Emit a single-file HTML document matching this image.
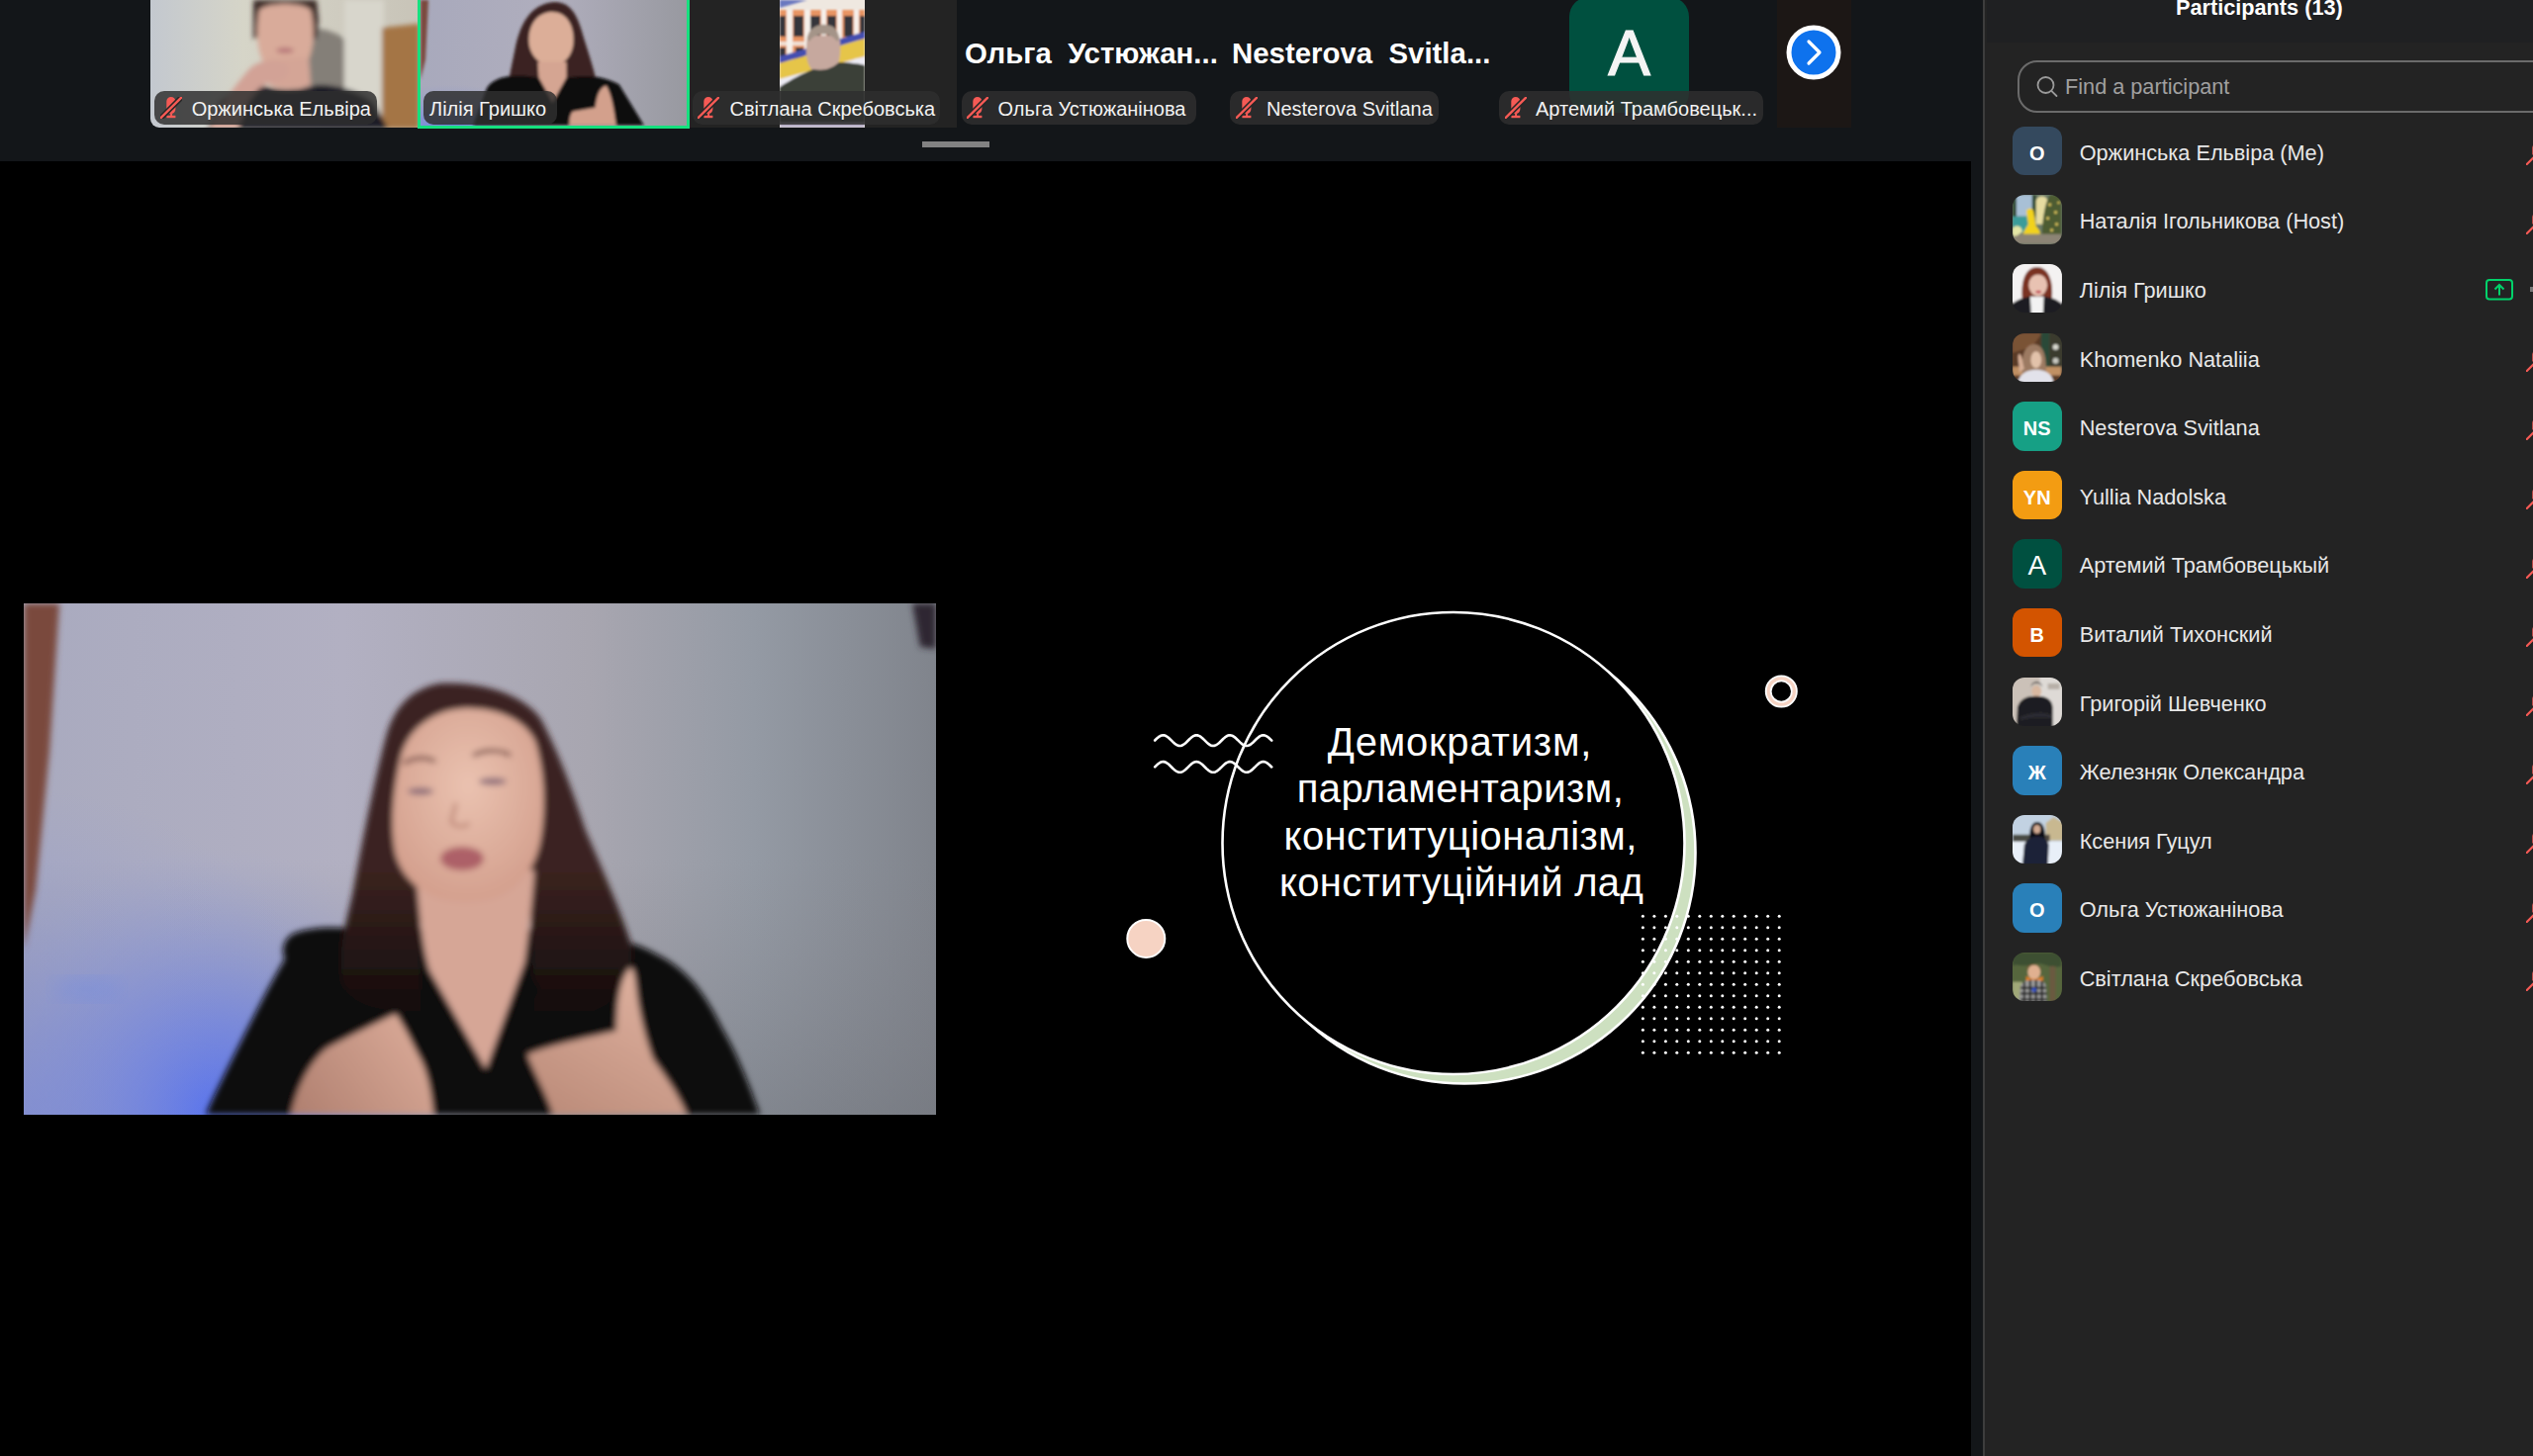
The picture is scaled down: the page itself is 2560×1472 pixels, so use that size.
<!DOCTYPE html>
<html><head><meta charset="utf-8">
<style>
*{margin:0;padding:0;box-sizing:border-box}
html,body{width:2560px;height:1472px;overflow:hidden;background:#000;font-family:"Liberation Sans",sans-serif}
.a{position:absolute}
.strip{left:0;top:0;width:2004px;height:163px;background:#131619}
.vbar{left:1992px;top:162px;width:12px;height:1310px;background:#131619}
.panel{left:2006px;top:0;width:554px;height:1472px;background:#232323}
.pborder{left:2004px;top:0;width:1.6px;height:1472px;background:#3d3d3d}
.phead{left:2008px;top:0;width:552px;height:43px;background:#1f2022}
.lbl{height:34px;border-radius:10px;background:rgba(46,46,46,0.84);color:#f2f2f2;font-size:20px;line-height:20px;white-space:nowrap}
.lbl span{position:absolute;top:7.5px}
.row{left:2034px;width:520px;height:50px}
.av{position:absolute;left:0;top:0;width:49.5px;height:49.5px;border-radius:12px;color:#fff;font-weight:bold;font-size:21.5px;text-align:center;line-height:54px;overflow:hidden}
.nm{position:absolute;left:67.7px;top:16.2px;font-size:21.7px;line-height:21.7px;color:#e8e8e8;white-space:nowrap}
.rmic{position:absolute;left:519px;top:24px}
</style></head><body>
<div class="a strip"></div>
<div class="a vbar"></div>
<div class="a pborder"></div>
<div class="a panel"></div>
<div class="a phead"></div>

<!-- top strip tiles -->
<!-- tile 1 -->
<div class="a" style="left:152px;top:0;width:270px;height:129px;overflow:hidden;border-radius:0 0 0 9px">
<svg width="270" height="129" viewBox="152 0 270 129" style="display:block">
<defs><linearGradient id="t1bg" x1="0" y1="0" x2="1" y2="0"><stop offset="0" stop-color="#c3c8cf"/><stop offset="0.35" stop-color="#d6d5c8"/><stop offset="0.7" stop-color="#cfccc0"/><stop offset="1" stop-color="#c8c4b8"/></linearGradient>
<filter id="t1b"><feGaussianBlur stdDeviation="2.5"/></filter></defs>
<rect x="152" y="0" width="270" height="129" fill="url(#t1bg)"/>
<g filter="url(#t1b)">
<path d="M300 28 C312 26 340 30 348 40 L350 92 L306 92 Z" fill="#77716b" opacity="0.85"/>
<rect x="348" y="0" width="40" height="129" fill="#d8d6cc"/>
<path d="M386 28 L424 24 L424 130 L386 130 Z" fill="#a47444"/>
<path d="M256 0 L320 0 L322 20 L320 40 L314 36 L312 14 L264 14 L262 36 L256 40 Z" fill="#3a2c28"/>
<path d="M262 10 C270 2 306 2 314 10 C318 25 318 45 312 60 C305 72 296 77 288 77 C278 77 268 70 264 58 C259 45 259 25 262 10 Z" fill="#d9ab9a"/>
<path d="M272 60 L272 86 C285 92 300 92 314 86 L312 58 Z" fill="#d4a596"/>
<ellipse cx="288" cy="51" rx="9" ry="3" fill="#b8787a"/>
<path d="M210 130 L222 104 C232 92 250 86 262 86 C278 92 300 93 320 86 C345 86 368 94 378 104 L392 130 Z" fill="#1e1e28"/>
<path d="M212 130 C220 110 235 90 250 72 C258 62 272 58 290 66 C294 72 290 80 280 82 C266 84 258 92 250 104 L240 130 Z" fill="#d2a296"/>
</g></svg></div>
<div class="a lbl" style="left:156px;top:92px;width:225px"><svg class="a" style="left:5.6px;top:5.9px" width="22" height="22" viewBox="0 0 22 22"><path d="M6.3 4.55A4.55 4.55 0 0 1 15.4 4.55V12.3A4.55 4.8 0 0 1 6.3 12.3Z" fill="#f65a55"/><rect x="10.1" y="16.5" width="2" height="3" fill="#f65a55"/><rect x="6.4" y="18.8" width="9" height="2.4" fill="#f65a55"/><line x1="0.8" y1="21" x2="21" y2="0.8" stroke="#262727" stroke-width="5.5"/><line x1="0.8" y1="21" x2="21" y2="0.8" stroke="#f65a55" stroke-width="2.4" stroke-linecap="round"/></svg><span style="left:37.7px">Оржинська Ельвіра</span></div>

<!-- tile 2 (active speaker) -->
<div class="a" style="left:422px;top:-3px;width:275px;height:133.4px;border:3.4px solid #16e07e;overflow:hidden;background:#9899a0">
<svg width="100%" height="100%" viewBox="425 0 268 126.6" preserveAspectRatio="none" style="display:block">
<defs><linearGradient id="t2bg" x1="0" y1="0" x2="1" y2="0"><stop offset="0" stop-color="#a8a9bc"/><stop offset="0.5" stop-color="#b0aebd"/><stop offset="1" stop-color="#9899a0"/></linearGradient>
<radialGradient id="t2bl" cx="0.15" cy="1" r="0.5"><stop offset="0" stop-color="#5a78ee" stop-opacity="0.8"/><stop offset="1" stop-color="#8090d8" stop-opacity="0"/></radialGradient>
<filter id="t2b"><feGaussianBlur stdDeviation="1.8"/></filter></defs>
<rect x="425" y="0" width="268" height="127" fill="url(#t2bg)"/>
<rect x="425" y="40" width="200" height="90" fill="url(#t2bl)"/>
<g filter="url(#t2b)">
<path d="M425 0 L433 0 L430 60 L425 80 Z" fill="#7a4a3e"/>
<path d="M560 2 C535 4 525 25 520 50 C515 75 510 95 512 110 L606 110 C606 90 598 65 590 40 C584 18 578 2 560 2 Z" fill="#3a2320"/>
<path d="M557 12 C540 13 534 28 534 40 C534 55 545 66 557 66 C570 66 579 55 579 40 C579 25 572 12 557 12 Z" fill="#dcae98"/>
<path d="M543 62 L544 78 L558 103 L572 78 L572 62 Z" fill="#d5a592"/>
<path d="M478 126 L492 88 C500 76 520 74 544 78 L558 103 L572 78 C590 75 610 76 625 85 L650 126 Z" fill="#0c0a0b"/>
<path d="M612 86 C604 88 602 100 601 108 L578 112 C574 118 575 126 575 126 L622 126 C620 112 618 96 612 86 Z" fill="#d3a08c"/>
</g>
</svg></div>
<div class="a lbl" style="left:428px;top:92px;width:135px"><span style="left:6px">Лілія Гришко</span></div>

<!-- tile 3 -->
<div class="a" style="left:697px;top:0;width:270px;height:129px;background:#232323"></div>
<svg class="a" style="left:788px;top:0" width="86" height="129" viewBox="788 0 86 129">
<defs><filter id="t3b"><feGaussianBlur stdDeviation="1.2"/></filter></defs>
<rect x="788" y="0" width="86" height="129" fill="#efe8e0"/>
<g filter="url(#t3b)">
<path d="M788 0 L816 0 L788 8 Z" fill="#6a78c0"/>
<rect x="788" y="10" width="86" height="35" fill="#e89464"/>
<rect x="788" y="42" width="86" height="4" fill="#f0e0d4"/>
<rect x="788" y="46" width="86" height="20" fill="#e89464"/>
<g fill="#f6f0ea"><rect x="795" y="10" width="6" height="56"/><rect x="813" y="10" width="6" height="56"/><rect x="830" y="10" width="5" height="56"/><rect x="846" y="10" width="5" height="56"/><rect x="863" y="10" width="5" height="56"/></g>
<g fill="#34343a"><rect x="788" y="16" width="6" height="21"/><rect x="802" y="16" width="10" height="21"/><rect x="819" y="16" width="10" height="21"/><rect x="836" y="16" width="9" height="21"/><rect x="853" y="16" width="9" height="21"/><rect x="869" y="16" width="5" height="21"/><rect x="788" y="48" width="6" height="14"/><rect x="804" y="48" width="8" height="14"/></g>
<path d="M788 57 L874 32 L874 39 L788 64 Z" fill="#4450b0"/>
<path d="M788 64 L874 39 L874 57 L788 80 Z" fill="#e6c54a"/>
<path d="M788 80 L874 57 L874 66 L788 92 Z" fill="#ecebf4"/>
<path d="M816 36 C814 50 814 62 820 70 C826 76 842 76 846 68 C850 58 850 44 848 36 Z" fill="#c6a89e"/>
<path d="M816 40 C816 28 828 24 834 25 C842 25 848 30 848 40 L846 42 C840 32 824 32 818 42 Z" fill="#a49488"/>
<path d="M788 88 C800 80 812 74 822 70 C832 72 840 70 848 63 C860 63 870 65 874 66 L874 129 L788 129 Z" fill="#3a3f39"/>
<rect x="788" y="124" width="86" height="5" fill="#b8b0c8"/>
</g>
</svg>
<div class="a lbl" style="left:699.5px;top:92px;width:250px"><svg class="a" style="left:5.6px;top:5.9px" width="22" height="22" viewBox="0 0 22 22"><path d="M6.3 4.55A4.55 4.55 0 0 1 15.4 4.55V12.3A4.55 4.8 0 0 1 6.3 12.3Z" fill="#f65a55"/><rect x="10.1" y="16.5" width="2" height="3" fill="#f65a55"/><rect x="6.4" y="18.8" width="9" height="2.4" fill="#f65a55"/><line x1="0.8" y1="21" x2="21" y2="0.8" stroke="#262727" stroke-width="5.5"/><line x1="0.8" y1="21" x2="21" y2="0.8" stroke="#f65a55" stroke-width="2.4" stroke-linecap="round"/></svg><span style="left:38px">Світлана Скребовська</span></div>

<!-- tile 4,5 bold names -->
<div class="a" style="left:975px;top:38.8px;font-size:29.4px;line-height:30px;font-weight:bold;color:#fff;white-space:pre">Ольга  Устюжан...</div>
<div class="a" style="left:1245px;top:38.8px;font-size:29.4px;line-height:30px;font-weight:bold;color:#fff;white-space:pre">Nesterova  Svitla...</div>
<div class="a lbl" style="left:971.5px;top:92px;width:237px"><svg class="a" style="left:5.6px;top:5.9px" width="22" height="22" viewBox="0 0 22 22"><path d="M6.3 4.55A4.55 4.55 0 0 1 15.4 4.55V12.3A4.55 4.8 0 0 1 6.3 12.3Z" fill="#f65a55"/><rect x="10.1" y="16.5" width="2" height="3" fill="#f65a55"/><rect x="6.4" y="18.8" width="9" height="2.4" fill="#f65a55"/><line x1="0.8" y1="21" x2="21" y2="0.8" stroke="#262727" stroke-width="5.5"/><line x1="0.8" y1="21" x2="21" y2="0.8" stroke="#f65a55" stroke-width="2.4" stroke-linecap="round"/></svg><span style="left:37px">Ольга Устюжанінова</span></div>
<div class="a lbl" style="left:1243px;top:92px;width:211px"><svg class="a" style="left:5.6px;top:5.9px" width="22" height="22" viewBox="0 0 22 22"><path d="M6.3 4.55A4.55 4.55 0 0 1 15.4 4.55V12.3A4.55 4.8 0 0 1 6.3 12.3Z" fill="#f65a55"/><rect x="10.1" y="16.5" width="2" height="3" fill="#f65a55"/><rect x="6.4" y="18.8" width="9" height="2.4" fill="#f65a55"/><line x1="0.8" y1="21" x2="21" y2="0.8" stroke="#262727" stroke-width="5.5"/><line x1="0.8" y1="21" x2="21" y2="0.8" stroke="#f65a55" stroke-width="2.4" stroke-linecap="round"/></svg><span style="left:37px">Nesterova Svitlana</span></div>

<!-- tile 6 -->
<div class="a" style="left:1586px;top:-3px;width:121px;height:117px;border-radius:20px;background:#00503f"></div>
<div class="a" style="left:1586px;top:21.5px;width:121px;text-align:center;font-size:64px;line-height:64px;color:#f4f4f4;-webkit-text-stroke:1.2px #f4f4f4">A</div>
<div class="a lbl" style="left:1515px;top:92px;width:267px"><svg class="a" style="left:5.6px;top:5.9px" width="22" height="22" viewBox="0 0 22 22"><path d="M6.3 4.55A4.55 4.55 0 0 1 15.4 4.55V12.3A4.55 4.8 0 0 1 6.3 12.3Z" fill="#f65a55"/><rect x="10.1" y="16.5" width="2" height="3" fill="#f65a55"/><rect x="6.4" y="18.8" width="9" height="2.4" fill="#f65a55"/><line x1="0.8" y1="21" x2="21" y2="0.8" stroke="#262727" stroke-width="5.5"/><line x1="0.8" y1="21" x2="21" y2="0.8" stroke="#f65a55" stroke-width="2.4" stroke-linecap="round"/></svg><span style="left:37px">Артемий Трамбовецьк...</span></div>

<!-- tile 7 partial -->
<div class="a" style="left:1796px;top:0;width:75px;height:129px;background:#1c1715"></div>
<svg class="a" style="left:1805px;top:25px" width="56" height="56" viewBox="0 0 56 56"><circle cx="28" cy="28" r="25" fill="#0e72ed" stroke="#fff" stroke-width="5"/><path d="M23 17 L34 28 L23 39" fill="none" stroke="#fff" stroke-width="3.2" stroke-linecap="round" stroke-linejoin="round"/></svg>

<!-- scroll thumb -->
<div class="a" style="left:932px;top:142.5px;width:68px;height:6.5px;background:#828282"></div>

<!-- main video -->
<svg class="a" style="left:24px;top:610px" width="922" height="517" viewBox="24 610 922 517">
<defs>
<linearGradient id="bgA" x1="0" y1="0" x2="1" y2="0">
<stop offset="0" stop-color="#a9aabf"/><stop offset="0.35" stop-color="#b2b0c2"/><stop offset="0.62" stop-color="#a8a6b0"/><stop offset="0.8" stop-color="#949aa4"/><stop offset="1" stop-color="#80848c"/>
</linearGradient>
<radialGradient id="blueG" cx="215" cy="1127" r="270" gradientUnits="userSpaceOnUse">
<stop offset="0" stop-color="#4868f4" stop-opacity="1"/><stop offset="0.35" stop-color="#6a80e8" stop-opacity="0.75"/><stop offset="1" stop-color="#a0a8d8" stop-opacity="0"/>
</radialGradient>
<linearGradient id="botR" x1="0" y1="0" x2="0" y2="1"><stop offset="0.5" stop-color="#808088" stop-opacity="0"/><stop offset="1" stop-color="#70737a" stop-opacity="0.5"/></linearGradient>
<filter id="bl" x="-5%" y="-5%" width="110%" height="110%"><feGaussianBlur stdDeviation="3"/></filter>
<filter id="bl2"><feGaussianBlur stdDeviation="10"/></filter>
<radialGradient id="blueL" gradientUnits="userSpaceOnUse" cx="24" cy="1127" r="330"><stop offset="0" stop-color="#7f8ee0" stop-opacity="0.65"/><stop offset="1" stop-color="#8e98d8" stop-opacity="0"/></radialGradient>
<linearGradient id="handL" gradientUnits="userSpaceOnUse" x1="420" y1="1040" x2="300" y2="1127"><stop offset="0" stop-color="#d8a896"/><stop offset="1" stop-color="#b08070"/></linearGradient>
<linearGradient id="handR" gradientUnits="userSpaceOnUse" x1="640" y1="990" x2="560" y2="1127"><stop offset="0" stop-color="#dcae9c"/><stop offset="1" stop-color="#bc8c7a"/></linearGradient>
<linearGradient id="hairG" gradientUnits="userSpaceOnUse" x1="0" y1="880" x2="0" y2="1020"><stop offset="0" stop-color="#3b2320"/><stop offset="1" stop-color="#140c0c"/></linearGradient>
<radialGradient id="faceG" cx="0.5" cy="0.4" r="0.6"><stop offset="0" stop-color="#eac2b0"/><stop offset="1" stop-color="#d4a08e"/></radialGradient>
</defs>
<rect x="24" y="610" width="922" height="517" fill="url(#bgA)"/>
<rect x="24" y="610" width="922" height="517" fill="url(#botR)"/>
<rect x="24" y="760" width="640" height="367" fill="url(#blueG)"/>
<rect x="24" y="760" width="500" height="367" fill="url(#blueL)"/>
<g filter="url(#bl2)"><ellipse cx="88" cy="1000" rx="35" ry="12" fill="#6a88e8" opacity="0.3"/></g>

<g filter="url(#bl)">
<path d="M24 610 L60 610 L50 760 L36 900 L24 960 Z" fill="#7a4a3e"/>
<path d="M922 610 L946 610 L946 656 L930 654 Z" fill="#2e2832"/>
<!-- black top -->
<path d="M296 944 C286 950 284 962 288 969 C270 1000 250 1040 240 1060 C225 1090 215 1110 208 1127 L768 1127 C755 1090 742 1060 730 1040 C715 1010 700 985 670 968 C655 960 645 955 638 954 L600 940 L345 938 C330 937 310 938 296 944 Z" fill="#0b090a"/>
<!-- hair -->
<path d="M444 691 C414 697 398 716 390 745 C378 790 366 850 356 905 C349 935 342 960 345 990 C350 1010 370 1020 400 1022 L425 1022 L425 900 L535 900 L540 1022 L600 1022 C630 1010 642 985 638 955 C625 915 607 875 592 840 C578 797 562 755 546 726 C530 704 490 688 444 691 Z" fill="url(#hairG)"/>
<!-- neck + chest V -->
<path d="M420 880 C424 920 426 955 434 981 L491 1081 L530 973 C534 945 538 910 540 880 Z" fill="#d6a696"/>
<path d="M434 981 L491 1081 L530 973 L545 1000 L495 1100 L425 990 Z" fill="#0b090a"/>
<!-- face -->
<path d="M471 716 C440 717 413 735 405 765 C398 795 394 830 399 860 C404 885 425 905 450 910 C465 913 485 913 500 908 C525 898 540 880 546 850 C552 815 550 780 541 750 C531 728 505 716 471 716 Z" fill="url(#faceG)"/>
<!-- lips -->
<ellipse cx="467" cy="868" rx="22" ry="12" fill="#ad6068"/>
<!-- brows / eyes -->
<path d="M408 772 C418 765 432 765 440 770" stroke="#7a5048" stroke-width="4" fill="none"/>
<path d="M478 764 C490 757 508 758 516 764" stroke="#7a5048" stroke-width="4" fill="none"/>
<ellipse cx="425" cy="800" rx="13" ry="3.5" fill="#8a6a78"/>
<ellipse cx="498" cy="790" rx="14" ry="3.5" fill="#8a6a78"/>
<path d="M461 812 L456 830 C458 836 470 837 474 832" stroke="#b88070" stroke-width="3" fill="none"/>
<!-- left hand -->
<path d="M400 1025 C385 1032 352 1048 330 1060 C312 1075 300 1100 294 1127 L438 1127 C436 1105 432 1085 425 1071 C418 1058 410 1040 400 1025 Z" fill="url(#handL)"/>
<!-- right hand -->
<path d="M638 978 C628 985 623 1010 623 1042 C600 1048 560 1055 533 1066 C540 1085 552 1105 559 1127 L694 1127 C685 1105 670 1085 660 1071 C652 1050 645 1020 643 1000 C642 990 641 982 638 978 Z" fill="url(#handR)"/>
</g>
</svg>

<!-- slide -->
<svg class="a" style="left:1100px;top:580px" width="760" height="540" viewBox="1100 580 760 540">
<circle cx="1480" cy="862" r="233.5" fill="#cde0c0" stroke="#fff" stroke-width="2.6"/>
<circle cx="1469" cy="852.5" r="233.5" fill="#000" stroke="#fff" stroke-width="2.6"/>
<polyline fill="none" stroke="#fff" stroke-width="2.6" stroke-linecap="round" points="1167.2,748.51 1168.2,747.53 1169.2,746.58 1170.2,745.70 1171.2,744.92 1172.2,744.28 1173.2,743.78 1174.2,743.46 1175.2,743.31 1176.2,743.35 1177.2,743.57 1178.2,743.96 1179.2,744.52 1180.2,745.22 1181.2,746.04 1182.2,746.95 1183.2,747.92 1184.2,748.91 1185.2,749.90 1186.2,750.84 1187.2,751.70 1188.2,752.46 1189.2,753.09 1190.2,753.57 1191.2,753.87 1192.2,754.00 1193.2,753.94 1194.2,753.69 1195.2,753.28 1196.2,752.70 1197.2,751.98 1198.2,751.15 1199.2,750.23 1200.2,749.26 1201.2,748.26 1202.2,747.28 1203.2,746.35 1204.2,745.50 1205.2,744.75 1206.2,744.14 1207.2,743.68 1208.2,743.40 1209.2,743.30 1210.2,743.38 1211.2,743.65 1212.2,744.09 1213.2,744.68 1214.2,745.42 1215.2,746.26 1216.2,747.19 1217.2,748.17 1218.2,749.16 1219.2,750.14 1220.2,751.06 1221.2,751.90 1222.2,752.63 1223.2,753.23 1224.2,753.66 1225.2,753.92 1226.2,754.00 1227.2,753.89 1228.2,753.61 1229.2,753.15 1230.2,752.53 1231.2,751.78 1232.2,750.93 1233.2,749.99 1234.2,749.01 1235.2,748.02 1236.2,747.04 1237.2,746.13 1238.2,745.30 1239.2,744.58 1240.2,744.01 1241.2,743.60 1242.2,743.36 1243.2,743.30 1244.2,743.43 1245.2,743.74 1246.2,744.22 1247.2,744.85 1248.2,745.62 1249.2,746.49 1250.2,747.43 1251.2,748.41 1252.2,749.41 1253.2,750.37 1254.2,751.28 1255.2,752.10 1256.2,752.80 1257.2,753.35 1258.2,753.74 1259.2,753.96 1260.2,753.99 1261.2,753.84 1262.2,753.51 1263.2,753.01 1264.2,752.36 1265.2,751.58 1266.2,750.70 1267.2,749.75 1268.2,748.76 1269.2,747.77 1270.2,746.81 1271.2,745.91 1272.2,745.11 1273.2,744.43 1274.2,743.89 1275.2,743.52 1276.2,743.33 1277.2,743.32 1278.2,743.49 1279.2,743.85 1280.2,744.37 1281.2,745.03 1282.2,745.83 1283.2,746.72 1284.2,747.67 1285.2,748.66"/>
<polyline fill="none" stroke="#fff" stroke-width="2.6" stroke-linecap="round" points="1167.2,775.31 1168.2,774.33 1169.2,773.38 1170.2,772.50 1171.2,771.72 1172.2,771.08 1173.2,770.58 1174.2,770.26 1175.2,770.11 1176.2,770.15 1177.2,770.37 1178.2,770.76 1179.2,771.32 1180.2,772.02 1181.2,772.84 1182.2,773.75 1183.2,774.72 1184.2,775.71 1185.2,776.70 1186.2,777.64 1187.2,778.50 1188.2,779.26 1189.2,779.89 1190.2,780.37 1191.2,780.67 1192.2,780.80 1193.2,780.74 1194.2,780.49 1195.2,780.08 1196.2,779.50 1197.2,778.78 1198.2,777.95 1199.2,777.03 1200.2,776.06 1201.2,775.06 1202.2,774.08 1203.2,773.15 1204.2,772.30 1205.2,771.55 1206.2,770.94 1207.2,770.48 1208.2,770.20 1209.2,770.10 1210.2,770.18 1211.2,770.45 1212.2,770.89 1213.2,771.48 1214.2,772.22 1215.2,773.06 1216.2,773.99 1217.2,774.97 1218.2,775.96 1219.2,776.94 1220.2,777.86 1221.2,778.70 1222.2,779.43 1223.2,780.03 1224.2,780.46 1225.2,780.72 1226.2,780.80 1227.2,780.69 1228.2,780.41 1229.2,779.95 1230.2,779.33 1231.2,778.58 1232.2,777.73 1233.2,776.79 1234.2,775.81 1235.2,774.82 1236.2,773.84 1237.2,772.93 1238.2,772.10 1239.2,771.38 1240.2,770.81 1241.2,770.40 1242.2,770.16 1243.2,770.10 1244.2,770.23 1245.2,770.54 1246.2,771.02 1247.2,771.65 1248.2,772.42 1249.2,773.29 1250.2,774.23 1251.2,775.21 1252.2,776.21 1253.2,777.17 1254.2,778.08 1255.2,778.90 1256.2,779.60 1257.2,780.15 1258.2,780.54 1259.2,780.76 1260.2,780.79 1261.2,780.64 1262.2,780.31 1263.2,779.81 1264.2,779.16 1265.2,778.38 1266.2,777.50 1267.2,776.55 1268.2,775.56 1269.2,774.57 1270.2,773.61 1271.2,772.71 1272.2,771.91 1273.2,771.23 1274.2,770.69 1275.2,770.32 1276.2,770.13 1277.2,770.12 1278.2,770.29 1279.2,770.65 1280.2,771.17 1281.2,771.83 1282.2,772.63 1283.2,773.52 1284.2,774.47 1285.2,775.46"/>
<circle cx="1158.3" cy="948.9" r="19" fill="#f6d3c3" stroke="#fff" stroke-width="2"/>
<circle cx="1800.3" cy="699" r="13.2" fill="none" stroke="#f6d3c3" stroke-width="4.5"/>
<circle cx="1800.3" cy="699" r="15.6" fill="none" stroke="#fff" stroke-width="1.8"/>
<circle cx="1800.3" cy="699" r="10.6" fill="none" stroke="#fff" stroke-width="1.8"/>
<g fill="#fff"><circle cx="1660.4" cy="926.2" r="1.5"/><circle cx="1671.9" cy="926.2" r="1.5"/><circle cx="1683.4" cy="926.2" r="1.5"/><circle cx="1694.8" cy="926.2" r="1.5"/><circle cx="1706.3" cy="926.2" r="1.5"/><circle cx="1717.8" cy="926.2" r="1.5"/><circle cx="1729.3" cy="926.2" r="1.5"/><circle cx="1740.8" cy="926.2" r="1.5"/><circle cx="1752.2" cy="926.2" r="1.5"/><circle cx="1763.7" cy="926.2" r="1.5"/><circle cx="1775.2" cy="926.2" r="1.5"/><circle cx="1786.7" cy="926.2" r="1.5"/><circle cx="1798.2" cy="926.2" r="1.5"/><circle cx="1660.4" cy="937.7" r="1.5"/><circle cx="1671.9" cy="937.7" r="1.5"/><circle cx="1683.4" cy="937.7" r="1.5"/><circle cx="1694.8" cy="937.7" r="1.5"/><circle cx="1706.3" cy="937.7" r="1.5"/><circle cx="1717.8" cy="937.7" r="1.5"/><circle cx="1729.3" cy="937.7" r="1.5"/><circle cx="1740.8" cy="937.7" r="1.5"/><circle cx="1752.2" cy="937.7" r="1.5"/><circle cx="1763.7" cy="937.7" r="1.5"/><circle cx="1775.2" cy="937.7" r="1.5"/><circle cx="1786.7" cy="937.7" r="1.5"/><circle cx="1798.2" cy="937.7" r="1.5"/><circle cx="1660.4" cy="949.2" r="1.5"/><circle cx="1671.9" cy="949.2" r="1.5"/><circle cx="1683.4" cy="949.2" r="1.5"/><circle cx="1694.8" cy="949.2" r="1.5"/><circle cx="1706.3" cy="949.2" r="1.5"/><circle cx="1717.8" cy="949.2" r="1.5"/><circle cx="1729.3" cy="949.2" r="1.5"/><circle cx="1740.8" cy="949.2" r="1.5"/><circle cx="1752.2" cy="949.2" r="1.5"/><circle cx="1763.7" cy="949.2" r="1.5"/><circle cx="1775.2" cy="949.2" r="1.5"/><circle cx="1786.7" cy="949.2" r="1.5"/><circle cx="1798.2" cy="949.2" r="1.5"/><circle cx="1660.4" cy="960.7" r="1.5"/><circle cx="1671.9" cy="960.7" r="1.5"/><circle cx="1683.4" cy="960.7" r="1.5"/><circle cx="1694.8" cy="960.7" r="1.5"/><circle cx="1706.3" cy="960.7" r="1.5"/><circle cx="1717.8" cy="960.7" r="1.5"/><circle cx="1729.3" cy="960.7" r="1.5"/><circle cx="1740.8" cy="960.7" r="1.5"/><circle cx="1752.2" cy="960.7" r="1.5"/><circle cx="1763.7" cy="960.7" r="1.5"/><circle cx="1775.2" cy="960.7" r="1.5"/><circle cx="1786.7" cy="960.7" r="1.5"/><circle cx="1798.2" cy="960.7" r="1.5"/><circle cx="1660.4" cy="972.2" r="1.5"/><circle cx="1671.9" cy="972.2" r="1.5"/><circle cx="1683.4" cy="972.2" r="1.5"/><circle cx="1694.8" cy="972.2" r="1.5"/><circle cx="1706.3" cy="972.2" r="1.5"/><circle cx="1717.8" cy="972.2" r="1.5"/><circle cx="1729.3" cy="972.2" r="1.5"/><circle cx="1740.8" cy="972.2" r="1.5"/><circle cx="1752.2" cy="972.2" r="1.5"/><circle cx="1763.7" cy="972.2" r="1.5"/><circle cx="1775.2" cy="972.2" r="1.5"/><circle cx="1786.7" cy="972.2" r="1.5"/><circle cx="1798.2" cy="972.2" r="1.5"/><circle cx="1660.4" cy="983.7" r="1.5"/><circle cx="1671.9" cy="983.7" r="1.5"/><circle cx="1683.4" cy="983.7" r="1.5"/><circle cx="1694.8" cy="983.7" r="1.5"/><circle cx="1706.3" cy="983.7" r="1.5"/><circle cx="1717.8" cy="983.7" r="1.5"/><circle cx="1729.3" cy="983.7" r="1.5"/><circle cx="1740.8" cy="983.7" r="1.5"/><circle cx="1752.2" cy="983.7" r="1.5"/><circle cx="1763.7" cy="983.7" r="1.5"/><circle cx="1775.2" cy="983.7" r="1.5"/><circle cx="1786.7" cy="983.7" r="1.5"/><circle cx="1798.2" cy="983.7" r="1.5"/><circle cx="1660.4" cy="995.2" r="1.5"/><circle cx="1671.9" cy="995.2" r="1.5"/><circle cx="1683.4" cy="995.2" r="1.5"/><circle cx="1694.8" cy="995.2" r="1.5"/><circle cx="1706.3" cy="995.2" r="1.5"/><circle cx="1717.8" cy="995.2" r="1.5"/><circle cx="1729.3" cy="995.2" r="1.5"/><circle cx="1740.8" cy="995.2" r="1.5"/><circle cx="1752.2" cy="995.2" r="1.5"/><circle cx="1763.7" cy="995.2" r="1.5"/><circle cx="1775.2" cy="995.2" r="1.5"/><circle cx="1786.7" cy="995.2" r="1.5"/><circle cx="1798.2" cy="995.2" r="1.5"/><circle cx="1660.4" cy="1006.7" r="1.5"/><circle cx="1671.9" cy="1006.7" r="1.5"/><circle cx="1683.4" cy="1006.7" r="1.5"/><circle cx="1694.8" cy="1006.7" r="1.5"/><circle cx="1706.3" cy="1006.7" r="1.5"/><circle cx="1717.8" cy="1006.7" r="1.5"/><circle cx="1729.3" cy="1006.7" r="1.5"/><circle cx="1740.8" cy="1006.7" r="1.5"/><circle cx="1752.2" cy="1006.7" r="1.5"/><circle cx="1763.7" cy="1006.7" r="1.5"/><circle cx="1775.2" cy="1006.7" r="1.5"/><circle cx="1786.7" cy="1006.7" r="1.5"/><circle cx="1798.2" cy="1006.7" r="1.5"/><circle cx="1660.4" cy="1018.2" r="1.5"/><circle cx="1671.9" cy="1018.2" r="1.5"/><circle cx="1683.4" cy="1018.2" r="1.5"/><circle cx="1694.8" cy="1018.2" r="1.5"/><circle cx="1706.3" cy="1018.2" r="1.5"/><circle cx="1717.8" cy="1018.2" r="1.5"/><circle cx="1729.3" cy="1018.2" r="1.5"/><circle cx="1740.8" cy="1018.2" r="1.5"/><circle cx="1752.2" cy="1018.2" r="1.5"/><circle cx="1763.7" cy="1018.2" r="1.5"/><circle cx="1775.2" cy="1018.2" r="1.5"/><circle cx="1786.7" cy="1018.2" r="1.5"/><circle cx="1798.2" cy="1018.2" r="1.5"/><circle cx="1660.4" cy="1029.7" r="1.5"/><circle cx="1671.9" cy="1029.7" r="1.5"/><circle cx="1683.4" cy="1029.7" r="1.5"/><circle cx="1694.8" cy="1029.7" r="1.5"/><circle cx="1706.3" cy="1029.7" r="1.5"/><circle cx="1717.8" cy="1029.7" r="1.5"/><circle cx="1729.3" cy="1029.7" r="1.5"/><circle cx="1740.8" cy="1029.7" r="1.5"/><circle cx="1752.2" cy="1029.7" r="1.5"/><circle cx="1763.7" cy="1029.7" r="1.5"/><circle cx="1775.2" cy="1029.7" r="1.5"/><circle cx="1786.7" cy="1029.7" r="1.5"/><circle cx="1798.2" cy="1029.7" r="1.5"/><circle cx="1660.4" cy="1041.2" r="1.5"/><circle cx="1671.9" cy="1041.2" r="1.5"/><circle cx="1683.4" cy="1041.2" r="1.5"/><circle cx="1694.8" cy="1041.2" r="1.5"/><circle cx="1706.3" cy="1041.2" r="1.5"/><circle cx="1717.8" cy="1041.2" r="1.5"/><circle cx="1729.3" cy="1041.2" r="1.5"/><circle cx="1740.8" cy="1041.2" r="1.5"/><circle cx="1752.2" cy="1041.2" r="1.5"/><circle cx="1763.7" cy="1041.2" r="1.5"/><circle cx="1775.2" cy="1041.2" r="1.5"/><circle cx="1786.7" cy="1041.2" r="1.5"/><circle cx="1798.2" cy="1041.2" r="1.5"/><circle cx="1660.4" cy="1052.7" r="1.5"/><circle cx="1671.9" cy="1052.7" r="1.5"/><circle cx="1683.4" cy="1052.7" r="1.5"/><circle cx="1694.8" cy="1052.7" r="1.5"/><circle cx="1706.3" cy="1052.7" r="1.5"/><circle cx="1717.8" cy="1052.7" r="1.5"/><circle cx="1729.3" cy="1052.7" r="1.5"/><circle cx="1740.8" cy="1052.7" r="1.5"/><circle cx="1752.2" cy="1052.7" r="1.5"/><circle cx="1763.7" cy="1052.7" r="1.5"/><circle cx="1775.2" cy="1052.7" r="1.5"/><circle cx="1786.7" cy="1052.7" r="1.5"/><circle cx="1798.2" cy="1052.7" r="1.5"/><circle cx="1660.4" cy="1064.2" r="1.5"/><circle cx="1671.9" cy="1064.2" r="1.5"/><circle cx="1683.4" cy="1064.2" r="1.5"/><circle cx="1694.8" cy="1064.2" r="1.5"/><circle cx="1706.3" cy="1064.2" r="1.5"/><circle cx="1717.8" cy="1064.2" r="1.5"/><circle cx="1729.3" cy="1064.2" r="1.5"/><circle cx="1740.8" cy="1064.2" r="1.5"/><circle cx="1752.2" cy="1064.2" r="1.5"/><circle cx="1763.7" cy="1064.2" r="1.5"/><circle cx="1775.2" cy="1064.2" r="1.5"/><circle cx="1786.7" cy="1064.2" r="1.5"/><circle cx="1798.2" cy="1064.2" r="1.5"/></g>
</svg>
<div class="a" style="left:1075.5px;top:730px;width:800px;text-align:center;font-size:40px;line-height:40px;color:#fff;white-space:nowrap;letter-spacing:0.8px">Демократизм,</div>
<div class="a" style="left:1076px;top:777.4px;width:800px;text-align:center;font-size:40px;line-height:40px;color:#fff;white-space:nowrap;letter-spacing:0.45px">парламентаризм,</div>
<div class="a" style="left:1076.2px;top:824.6px;width:800px;text-align:center;font-size:40px;line-height:40px;color:#fff;white-space:nowrap;letter-spacing:0.45px">конституціоналізм,</div>
<div class="a" style="left:1077px;top:872px;width:800px;text-align:center;font-size:40px;line-height:40px;color:#fff;white-space:nowrap;letter-spacing:0.3px">конституційний лад</div>

<!-- panel header -->
<div class="a" style="left:2199px;top:-3px;font-size:21.7px;line-height:21.7px;font-weight:bold;color:#fff;white-space:nowrap">Participants (13)</div>
<!-- search -->
<div class="a" style="left:2039px;top:61px;width:560px;height:53px;border:2px solid #6b6b6b;border-radius:20px"></div>
<svg class="a" style="left:2054px;top:72px" width="30" height="30" viewBox="0 0 30 30"><circle cx="13.5" cy="14" r="8" fill="none" stroke="#9a9a9a" stroke-width="1.8"/><line x1="19.3" y1="19.8" x2="24.5" y2="25" stroke="#9a9a9a" stroke-width="1.8" stroke-linecap="round"/></svg>
<div class="a" style="left:2087px;top:76.7px;font-size:21.7px;line-height:21.7px;color:#a0a0a0;white-space:nowrap">Find a participant</div>

<!-- rows -->
<div class="a row" style="top:127.7px"><div class="av" style="background:#34495e;font-size:20px">O</div><div class="nm">Оржинська Ельвіра (Me)</div><svg style="position:absolute;left:518.5px;top:17.3px" width="22" height="22" viewBox="0 0 22 22"><path d="M6.3 4.55A4.55 4.55 0 0 1 15.4 4.55V12.3A4.55 4.8 0 0 1 6.3 12.3Z" fill="#f65a55"/><line x1="0.8" y1="21" x2="21" y2="0.8" stroke="#232323" stroke-width="5.5"/><line x1="0.8" y1="21" x2="21" y2="0.8" stroke="#f65a55" stroke-width="2.2" stroke-linecap="round"/></svg></div>
<div class="a row" style="top:197.3px"><div class="av"><svg width="49.5" height="49.5" viewBox="0 0 50 50" style="display:block"><defs><filter id="pa1" x="-10%" y="-10%" width="120%" height="120%"><feGaussianBlur stdDeviation="0.9"/></filter></defs><g filter="url(#pa1)"><rect x="-2" y="-2" width="54" height="54" fill="#6a7a68"/>
<rect x="2" y="0" width="20" height="22" fill="#a8c0d6"/>
<rect x="0" y="0" width="4" height="24" fill="#2e4a30"/><rect x="20" y="0" width="4" height="22" fill="#2e4a30"/>
<path d="M24 30 L24 6 C26 0 34 0 36 6 L36 30 Z" fill="#e6dca0"/>
<path d="M38 0 L50 0 L50 44 L30 44 C30 30 32 10 38 0 Z" fill="#4e5c32"/>
<g fill="#e0c860"><circle cx="38" cy="10" r="1.5"/><circle cx="44" cy="18" r="1.5"/><circle cx="36" cy="24" r="1.5"/><circle cx="45" cy="30" r="1.5"/><circle cx="40" cy="36" r="1.5"/><circle cx="47" cy="8" r="1.2"/></g>
<rect x="0" y="22" width="16" height="16" fill="#3a9c9a"/>
<path d="M14 16 C18 12 22 14 22 20 L24 32 C28 36 30 40 26 44 L10 44 C10 38 14 34 16 30 Z" fill="#f2d21e"/>
<rect x="0" y="40" width="50" height="10" fill="#8c8474"/>
<path d="M0 34 C4 30 10 32 10 38 L4 42 L0 42 Z" fill="#e4e6a6"/></g></svg></div><div class="nm">Наталія Ігольникова (Host)</div><svg style="position:absolute;left:518.5px;top:17.3px" width="22" height="22" viewBox="0 0 22 22"><path d="M6.3 4.55A4.55 4.55 0 0 1 15.4 4.55V12.3A4.55 4.8 0 0 1 6.3 12.3Z" fill="#f65a55"/><line x1="0.8" y1="21" x2="21" y2="0.8" stroke="#232323" stroke-width="5.5"/><line x1="0.8" y1="21" x2="21" y2="0.8" stroke="#f65a55" stroke-width="2.2" stroke-linecap="round"/></svg></div>
<div class="a row" style="top:266.9px"><div class="av"><svg width="49.5" height="49.5" viewBox="0 0 50 50" style="display:block"><defs><filter id="pa2" x="-10%" y="-10%" width="120%" height="120%"><feGaussianBlur stdDeviation="0.9"/></filter></defs><g filter="url(#pa2)"><rect x="-2" y="-2" width="54" height="54" fill="#f4f2f2"/>
<path d="M10 37 C8 20 12 3 25 3 C38 3 42 20 40 37 Z" fill="#7a3222"/>
<ellipse cx="26" cy="21.5" rx="9.5" ry="11" fill="#e8c2b2"/>
<ellipse cx="26.5" cy="28.4" rx="3" ry="1.3" fill="#c04050"/>
<path d="M-2 52 L-2 42 C4 36 12 34 18 33 L32 33 C40 34 46 36 52 42 L52 52 Z" fill="#1a1a22"/>
<path d="M18 33 L32 33 L31 52 L19 52 Z" fill="#f2f2f2"/></g></svg></div><div class="nm">Лілія Гришко</div><svg style="position:absolute;left:478px;top:15px" width="28" height="22" viewBox="0 0 28 22"><rect x="1" y="1" width="26" height="19.5" rx="3" fill="none" stroke="#00d26a" stroke-width="2"/><path d="M14 16.5V6M9.5 10.5L14 6L18.5 10.5" fill="none" stroke="#00d26a" stroke-width="2"/></svg><div style="position:absolute;left:523px;top:23px;width:3px;height:5px;background:#777"></div></div>
<div class="a row" style="top:336.5px"><div class="av"><svg width="49.5" height="49.5" viewBox="0 0 50 50" style="display:block"><defs><filter id="pa3" x="-10%" y="-10%" width="120%" height="120%"><feGaussianBlur stdDeviation="0.9"/></filter></defs><g filter="url(#pa3)"><rect x="-2" y="-2" width="54" height="54" fill="#5a3a26"/>
<path d="M0 0 L30 0 L20 14 L0 20 Z" fill="#7a5236"/>
<rect x="29" y="-2" width="9" height="40" fill="#2c4a38"/>
<rect x="38" y="-2" width="14" height="40" fill="#3a3a2e"/>
<circle cx="44" cy="14" r="3" fill="#d8d8d0"/><circle cx="44" cy="28" r="3" fill="#c8c8c0"/>
<rect x="0" y="34" width="50" height="9" fill="#c09064"/>
<path d="M10 42 C8 25 12 11 22 11 C32 11 35 25 34 42 Z" fill="#9c7a62"/>
<ellipse cx="24" cy="27" rx="5.5" ry="8.5" fill="#e2c2aa"/>
<path d="M7 40 C7 30 4 22 7 21 C10 22 10 30 12 36 Z" fill="#d8b098"/>
<path d="M5 52 C6 42 14 37 24 37 C34 37 42 42 42 52 Z" fill="#e2e2ea"/></g></svg></div><div class="nm">Khomenko Nataliia</div><svg style="position:absolute;left:518.5px;top:17.3px" width="22" height="22" viewBox="0 0 22 22"><path d="M6.3 4.55A4.55 4.55 0 0 1 15.4 4.55V12.3A4.55 4.8 0 0 1 6.3 12.3Z" fill="#f65a55"/><line x1="0.8" y1="21" x2="21" y2="0.8" stroke="#232323" stroke-width="5.5"/><line x1="0.8" y1="21" x2="21" y2="0.8" stroke="#f65a55" stroke-width="2.2" stroke-linecap="round"/></svg></div>
<div class="a row" style="top:406.1px"><div class="av" style="background:#16a085;font-size:20px">NS</div><div class="nm">Nesterova Svitlana</div><svg style="position:absolute;left:518.5px;top:17.3px" width="22" height="22" viewBox="0 0 22 22"><path d="M6.3 4.55A4.55 4.55 0 0 1 15.4 4.55V12.3A4.55 4.8 0 0 1 6.3 12.3Z" fill="#f65a55"/><line x1="0.8" y1="21" x2="21" y2="0.8" stroke="#232323" stroke-width="5.5"/><line x1="0.8" y1="21" x2="21" y2="0.8" stroke="#f65a55" stroke-width="2.2" stroke-linecap="round"/></svg></div>
<div class="a row" style="top:475.7px"><div class="av" style="background:#f39c12;font-size:20px">YN</div><div class="nm">Yullia Nadolska</div><svg style="position:absolute;left:518.5px;top:17.3px" width="22" height="22" viewBox="0 0 22 22"><path d="M6.3 4.55A4.55 4.55 0 0 1 15.4 4.55V12.3A4.55 4.8 0 0 1 6.3 12.3Z" fill="#f65a55"/><line x1="0.8" y1="21" x2="21" y2="0.8" stroke="#232323" stroke-width="5.5"/><line x1="0.8" y1="21" x2="21" y2="0.8" stroke="#f65a55" stroke-width="2.2" stroke-linecap="round"/></svg></div>
<div class="a row" style="top:545.3px"><div class="av" style="background:#005040;font-size:28px;font-weight:normal">A</div><div class="nm">Артемий Трамбовецькый</div><svg style="position:absolute;left:518.5px;top:17.3px" width="22" height="22" viewBox="0 0 22 22"><path d="M6.3 4.55A4.55 4.55 0 0 1 15.4 4.55V12.3A4.55 4.8 0 0 1 6.3 12.3Z" fill="#f65a55"/><line x1="0.8" y1="21" x2="21" y2="0.8" stroke="#232323" stroke-width="5.5"/><line x1="0.8" y1="21" x2="21" y2="0.8" stroke="#f65a55" stroke-width="2.2" stroke-linecap="round"/></svg></div>
<div class="a row" style="top:614.9px"><div class="av" style="background:#d35400;font-size:20px">B</div><div class="nm">Виталий Тихонский</div><svg style="position:absolute;left:518.5px;top:17.3px" width="22" height="22" viewBox="0 0 22 22"><path d="M6.3 4.55A4.55 4.55 0 0 1 15.4 4.55V12.3A4.55 4.8 0 0 1 6.3 12.3Z" fill="#f65a55"/><line x1="0.8" y1="21" x2="21" y2="0.8" stroke="#232323" stroke-width="5.5"/><line x1="0.8" y1="21" x2="21" y2="0.8" stroke="#f65a55" stroke-width="2.2" stroke-linecap="round"/></svg></div>
<div class="a row" style="top:684.5px"><div class="av"><svg width="49.5" height="49.5" viewBox="0 0 50 50" style="display:block"><defs><filter id="pa4" x="-10%" y="-10%" width="120%" height="120%"><feGaussianBlur stdDeviation="0.9"/></filter></defs><g filter="url(#pa4)"><rect x="-2" y="-2" width="54" height="54" fill="#cbc1b8"/>
<rect x="28" y="-2" width="24" height="54" fill="#dedad6"/>
<rect x="36" y="6" width="12" height="6" fill="#b8b0a8"/>
<ellipse cx="24.5" cy="14" rx="5" ry="6" fill="#d8b8a0"/>
<path d="M19 10 C19 4 30 4 30 10 L30 8 C28 3 21 3 19 8 Z" fill="#222"/>
<path d="M4 52 L5 30 C8 22 14 19 24 19 C34 19 40 22 41 30 L41 52 Z" fill="#1e1e20"/>
<path d="M8 40 C16 36 30 34 40 38 L40 42 C30 40 16 41 8 44 Z" fill="#2c2c30"/></g></svg></div><div class="nm">Григорій Шевченко</div><svg style="position:absolute;left:518.5px;top:17.3px" width="22" height="22" viewBox="0 0 22 22"><path d="M6.3 4.55A4.55 4.55 0 0 1 15.4 4.55V12.3A4.55 4.8 0 0 1 6.3 12.3Z" fill="#f65a55"/><line x1="0.8" y1="21" x2="21" y2="0.8" stroke="#232323" stroke-width="5.5"/><line x1="0.8" y1="21" x2="21" y2="0.8" stroke="#f65a55" stroke-width="2.2" stroke-linecap="round"/></svg></div>
<div class="a row" style="top:754.1px"><div class="av" style="background:#2980b9;font-size:20px">Ж</div><div class="nm">Железняк Олександра</div><svg style="position:absolute;left:518.5px;top:17.3px" width="22" height="22" viewBox="0 0 22 22"><path d="M6.3 4.55A4.55 4.55 0 0 1 15.4 4.55V12.3A4.55 4.8 0 0 1 6.3 12.3Z" fill="#f65a55"/><line x1="0.8" y1="21" x2="21" y2="0.8" stroke="#232323" stroke-width="5.5"/><line x1="0.8" y1="21" x2="21" y2="0.8" stroke="#f65a55" stroke-width="2.2" stroke-linecap="round"/></svg></div>
<div class="a row" style="top:823.7px"><div class="av"><svg width="49.5" height="49.5" viewBox="0 0 50 50" style="display:block"><defs><filter id="pa5" x="-10%" y="-10%" width="120%" height="120%"><feGaussianBlur stdDeviation="0.9"/></filter></defs><g filter="url(#pa5)"><rect x="-2" y="-2" width="54" height="54" fill="#c2d2e2"/>
<path d="M34 26 L34 8 L42 2 L52 8 L52 26 Z" fill="#c8b890"/>
<rect x="0" y="20" width="20" height="9" fill="#4a4c44"/>
<rect x="28" y="20" width="10" height="8" fill="#504a40"/>
<rect x="-2" y="27" width="54" height="25" fill="#e8eff8"/>
<path d="M18 26 C16 14 20 7 25 7 C31 7 34 14 33 26 Z" fill="#101014"/>
<ellipse cx="25" cy="14.5" rx="3.6" ry="4.5" fill="#d2aa92"/>
<path d="M10 52 L12 30 C15 24 20 22 25 22 C31 22 35 24 37 30 L36 52 Z" fill="#1a2438"/></g></svg></div><div class="nm">Ксения Гуцул</div><svg style="position:absolute;left:518.5px;top:17.3px" width="22" height="22" viewBox="0 0 22 22"><path d="M6.3 4.55A4.55 4.55 0 0 1 15.4 4.55V12.3A4.55 4.8 0 0 1 6.3 12.3Z" fill="#f65a55"/><line x1="0.8" y1="21" x2="21" y2="0.8" stroke="#232323" stroke-width="5.5"/><line x1="0.8" y1="21" x2="21" y2="0.8" stroke="#f65a55" stroke-width="2.2" stroke-linecap="round"/></svg></div>
<div class="a row" style="top:893.3px"><div class="av" style="background:#2980b9;font-size:20px">O</div><div class="nm">Ольга Устюжанінова</div><svg style="position:absolute;left:518.5px;top:17.3px" width="22" height="22" viewBox="0 0 22 22"><path d="M6.3 4.55A4.55 4.55 0 0 1 15.4 4.55V12.3A4.55 4.8 0 0 1 6.3 12.3Z" fill="#f65a55"/><line x1="0.8" y1="21" x2="21" y2="0.8" stroke="#232323" stroke-width="5.5"/><line x1="0.8" y1="21" x2="21" y2="0.8" stroke="#f65a55" stroke-width="2.2" stroke-linecap="round"/></svg></div>
<div class="a row" style="top:962.9px"><div class="av"><svg width="49.5" height="49.5" viewBox="0 0 50 50" style="display:block"><defs><filter id="pa6" x="-10%" y="-10%" width="120%" height="120%"><feGaussianBlur stdDeviation="0.9"/></filter></defs><g filter="url(#pa6)"><rect x="-2" y="-2" width="54" height="54" fill="#56663c"/>
<path d="M0 0 L50 0 L50 14 C40 18 30 8 20 12 C10 16 4 10 0 14 Z" fill="#3c5030"/>
<rect x="38" y="14" width="6" height="36" fill="#6a5a40"/>
<rect x="0" y="30" width="10" height="20" fill="#a0a878"/>
<ellipse cx="22" cy="20" rx="6.5" ry="7.5" fill="#e0b090"/>
<path d="M14 18 C14 10 30 10 30 18 L28 14 C24 11 18 12 15 16 Z" fill="#8a5030"/>
<path d="M14 24 C18 28 26 28 31 24 L31 31 L14 31 Z" fill="#e88020"/>
<path d="M6 52 L8 34 C10 29 16 28 22 28 C28 28 33 29 34 34 L35 52 Z" fill="#9a9a9a"/>
<path d="M8 36 L34 36 M8 42 L35 42 M8 48 L35 48 M12 30 L12 52 M18 28 L18 52 M24 28 L24 52 M30 29 L30 52" stroke="#222" stroke-width="2"/>
<circle cx="22" cy="38" r="2.5" fill="#3050c0"/></g></svg></div><div class="nm">Світлана Скребовська</div><svg style="position:absolute;left:518.5px;top:17.3px" width="22" height="22" viewBox="0 0 22 22"><path d="M6.3 4.55A4.55 4.55 0 0 1 15.4 4.55V12.3A4.55 4.8 0 0 1 6.3 12.3Z" fill="#f65a55"/><line x1="0.8" y1="21" x2="21" y2="0.8" stroke="#232323" stroke-width="5.5"/><line x1="0.8" y1="21" x2="21" y2="0.8" stroke="#f65a55" stroke-width="2.2" stroke-linecap="round"/></svg></div>
</body></html>
